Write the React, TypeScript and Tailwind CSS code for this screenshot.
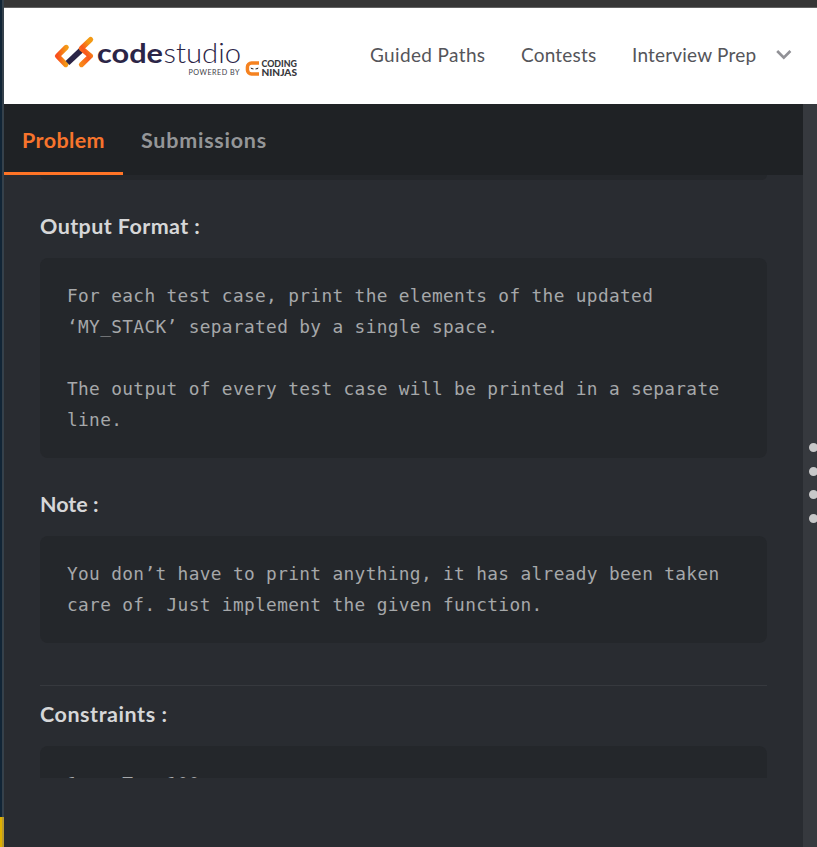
import type { ReactNode } from "react";

function Logo() {
  return (
    <svg width="250" height="50" viewBox="50 32 250 50" className="block shrink-0" aria-label="codestudio powered by Coding Ninjas">
      <defs>
        <linearGradient id="left" x1="0" y1="0" x2="1" y2="0">
          <stop offset="0" stopColor="#f9501c" />
          <stop offset="1" stopColor="#f49a16" />
        </linearGradient>
        <linearGradient id="right" x1="0" y1="1" x2="0.6" y2="0">
          <stop offset="0" stopColor="#f98a1a" />
          <stop offset="0.55" stopColor="#f9571c" />
          <stop offset="1" stopColor="#f39a14" />
        </linearGradient>
      </defs>
      <path d="M66.2 47.4 57.5 56l8.3 8.6" fill="none" stroke="url(#left)" strokeWidth="5.2" strokeLinecap="round" strokeLinejoin="round" />
      <path d="M67.5 63 82 49.4" stroke="#2b2547" strokeWidth="5.6" />
      <path d="M90.6 39.6 81.4 48.4 90.4 56 81.5 64.6" fill="none" stroke="url(#right)" strokeWidth="5.2" strokeLinecap="round" strokeLinejoin="round" />
      <text x="97" y="63" fill="#2b2547" fontFamily="Lato, sans-serif" fontSize="26" fontWeight="700" textLength="66" lengthAdjust="spacingAndGlyphs">code</text>
      <text x="163.5" y="63" fill="#2b2547" fontFamily="Lato, sans-serif" fontSize="26.5" fontWeight="300" textLength="77.5" lengthAdjust="spacingAndGlyphs">studio</text>
      <text x="188.5" y="74.5" fill="#3e3e48" fontFamily="Lato, sans-serif" fontSize="7.2" textLength="51" lengthAdjust="spacing">POWERED BY</text>
      <path d="M259 63h-7.5a4 4 0 0 0-4 4v3a4 4 0 0 0 4 4h7.5" fill="none" stroke="#f58220" strokeWidth="3.6" />
      <path d="M249.5 66.2h9.5v4h-9.5z" fill="#fff" />
      <path d="m250.5 67.6 3 .8v1.2l-2.4-.5zM258.5 67.6l-3 .8v1.2l2.4-.5z" fill="#333" />
      <text x="261.5" y="67.3" fill="#38383c" fontFamily="Lato, sans-serif" fontSize="8.5" fontWeight="900" textLength="35.5" lengthAdjust="spacingAndGlyphs">CODING</text>
      <text x="261.5" y="76" fill="#38383c" fontFamily="Lato, sans-serif" fontSize="8.5" fontWeight="900" textLength="35.5" lengthAdjust="spacingAndGlyphs">NINJAS</text>
    </svg>
  );
}

function Heading({ children, className = "" }: { children: ReactNode; className?: string }) {
  return <h2 className={`whitespace-nowrap font-['Lato',sans-serif] text-[21.5px] font-bold leading-8 text-[#d6d7d8] ${className}`}>{children}</h2>;
}

function CodeBlock({ children, className = "" }: { children: ReactNode; className?: string }) {
  return (
    <pre className={`rounded-lg bg-[#24272b] pl-[27px] pt-[22px] font-['DejaVu_Sans_Mono',monospace] text-[17.8px] leading-[31px] tracking-[0.355px] text-[#a6a8aa] ${className}`}>
      {children}
    </pre>
  );
}

export default function App() {
  return (
    <div className="flex h-[847px] w-[817px] overflow-hidden bg-[#292c31]">
      <div className="flex w-1 shrink-0 flex-col">
        <div className="flex h-[817px]">
          <div className="w-0.5 bg-[#112536]" />
          <div className="w-0.5 bg-[#35414b]" />
        </div>
        <div className="flex flex-1">
          <div className="w-0.5 bg-[#dfb000]" />
          <div className="w-0.5 bg-[#b99a2c]" />
        </div>
      </div>

      <div className="flex min-w-0 flex-1 flex-col">
        <div className="h-2 shrink-0 border-b border-[#626262] bg-[#363636]" />
        <header className="flex h-24 shrink-0 bg-white">
          <div className="ml-[46px] mt-6 w-[250px]">
            <Logo />
          </div>
          <nav className="ml-[70px] flex h-[94px] items-center whitespace-nowrap font-['Lato',sans-serif] text-[19px] text-[#55555a]">
            <a className="w-[151px] tracking-[0.36px]">Guided Paths</a>
            <a className="w-[111px] tracking-[0.2px]">Contests</a>
            <a className="w-[144px] tracking-[0.2px]">Interview Prep</a>
            <svg width="16" height="12" viewBox="0 0 16 12" fill="none" stroke="#919196" strokeWidth="2.7">
              <path d="m1.2 2 6.6 6.6L14.4 2" />
            </svg>
          </nav>
        </header>

        <div className="flex min-h-0 flex-1">
          <main className="flex w-[799px] shrink-0 flex-col">
            <div className="flex h-[71px] shrink-0 bg-[#1f2225] font-['Lato',sans-serif] text-[21.5px] font-bold">
              <div className="h-[71px] w-[119px] whitespace-nowrap border-b-[3px] border-[#ff7426] pl-[18px] pt-5 leading-8 tracking-[0.4px] text-[#f7742c]">Problem</div>
              <div className="whitespace-nowrap pl-[18px] pt-5 leading-8 tracking-[0.75px] text-[#949698]">Submissions</div>
            </div>
            <div className="h-[603px] overflow-hidden px-9">
              <div className="h-[5px] rounded-b-lg bg-[#24272b]" />
              <Heading className="mt-[30px] tracking-[0.42px]">Output Format :</Heading>
              <CodeBlock className="mt-4 h-[200px]">
                {"For each test case, print the elements of the updated\n‘MY_STACK’ separated by a single space.\n\nThe output of every test case will be printed in a separate\nline."}
              </CodeBlock>
              <Heading className="mt-[30px]">Note :</Heading>
              <CodeBlock className="mt-4 h-[107px]">
                {"You don’t have to print anything, it has already been taken\ncare of. Just implement the given function."}
              </CodeBlock>
              <div className="mt-[42px] border-t border-[#36393e]" />
              <Heading className="mt-3 tracking-[0.55px]">Constraints :</Heading>
              <CodeBlock className="mt-4 h-[107px]">{"1 <= T <=100"}</CodeBlock>
            </div>
          </main>
          <aside className="flex flex-1 flex-col items-start gap-[14.5px] overflow-hidden bg-[#36393e] pl-1.5 pt-[339px]">
            {[0, 1, 2, 3].map((dot) => (
              <span key={dot} className="h-[9px] w-[9px] shrink-0 rounded-full bg-[#c8c8c9]" />
            ))}
          </aside>
        </div>
      </div>
    </div>
  );
}
